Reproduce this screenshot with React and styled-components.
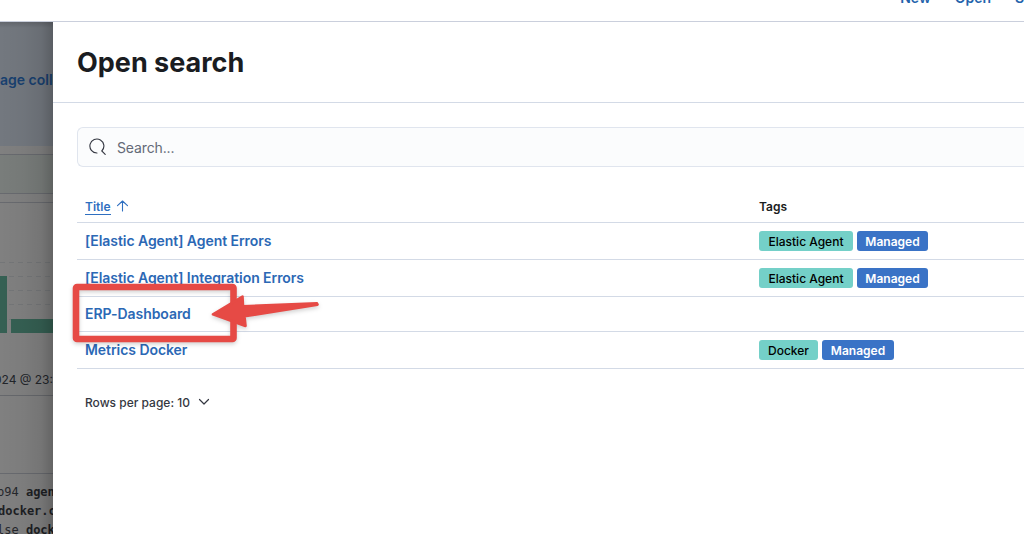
import React from "react";
import styled, { createGlobalStyle } from "styled-components";

const Global = createGlobalStyle`
  *, *::before, *::after { box-sizing: border-box; }
  body { margin: 0; overflow: hidden; background: #fff; font-family: Inter, "Liberation Sans", sans-serif; color: #1a1c21; }
`;

const Page = styled.div`
  width: 100%;
  height: 534px;
  display: flex;
  flex-direction: column;
  overflow: hidden;
`;

const TopBar = styled.nav`
  height: 22px;
  flex: none;
  border-bottom: 1px solid #cacfdc;
  display: flex;
  justify-content: flex-end;
  align-items: flex-end;
  gap: 24px;
  padding-bottom: 13px;
  overflow: hidden;
  white-space: nowrap;
`;

const NavLink = styled.a`
  font-size: 14px;
  line-height: 20px;
  font-weight: 600;
  color: #2463ac;
  &:last-child { width: 9px; }
`;

const Body = styled.div`
  flex: 1;
  min-height: 0;
  display: flex;
`;

const Backdrop = styled.aside`
  width: 53px;
  flex: none;
  position: relative;
  overflow: hidden;
  display: flex;
  flex-direction: column;
  background: #808080;
  white-space: nowrap;
  &::after {
    content: "";
    position: absolute;
    inset: 0;
    background: linear-gradient(to right, rgba(0,0,0,0) 0%, rgba(0,0,0,.03) 45%, rgba(0,0,0,.09) 78%, rgba(0,0,0,.22) 100%),
      linear-gradient(to bottom, rgba(0,0,0,.14), rgba(0,0,0,0) 6px);
  }
`;

const Banner = styled.div`
  height: 124px;
  flex: none;
  padding-top: 48px;
  background: #73787f;
  color: #18406f;
  font-size: 14px;
  line-height: 20px;
  font-weight: 600;
`;

const Strip = styled.div`
  height: ${(p) => p.$h}px;
  flex: none;
  background: ${(p) => p.$bg || "transparent"};
  border-bottom: 1px solid #686a6f;
`;

const Chart = styled.svg`
  display: block;
  flex: none;
  width: 53px;
  height: 131px;
`;

const DateText = styled.div`
  height: 62px;
  flex: none;
  padding-top: 36px;
  border-bottom: 1px solid #66686c;
  font-size: 12px;
  line-height: 20px;
  color: #22252a;
  text-indent: -6px;
`;

const Log = styled.div`
  padding-top: 9px;
  font-family: "DejaVu Sans Mono", "Liberation Mono", monospace;
  font-size: 12px;
  line-height: 19px;
  color: #25272c;
`;

const LogLine = styled.div`
  margin-left: ${(p) => p.$shift}px;
  white-space: pre;
  b { color: #1d1f24; }
`;

const Flyout = styled.main`
  flex: 1;
  min-width: 0;
  background: #fff;
`;

const FlyoutHeader = styled.header`
  height: 81px;
  border-bottom: 1px solid #d3dae6;
  padding: 25px 24px 0;
`;

const Heading = styled.h1`
  margin: 0;
  font-size: 27px;
  line-height: 32px;
  font-weight: 700;
`;

const Content = styled.section`
  padding: 24px 0 0 24px;
`;

const SearchField = styled.div`
  height: 40px;
  border: 1px solid #e0e5ee;
  border-right: 0;
  border-radius: 6px 0 0 6px;
  background: #fbfcfd;
  display: flex;
  align-items: center;
  gap: 11.5px;
  padding: 1px 0 0 10.5px;
  font-size: 14px;
  letter-spacing: -0.13px;
  color: #646a77;
  svg { display: block; margin-top: -1px; }
`;

const Table = styled.div`
  margin-top: 24px;
`;

const Row = styled.div`
  height: ${(p) => p.$h}px;
  border-bottom: 1px solid #d3dae6;
  display: grid;
  grid-template-columns: 674px 1fr;
  align-items: center;
  padding-left: 8px;
`;

const HeadRow = styled(Row)`
  font-size: 12px;
  line-height: 16px;
  font-weight: 600;
  padding-top: 1px;
`;

const SortLabel = styled.div`
  display: flex;
  align-items: center;
  gap: 5px;
  color: #2f6fc0;
  span { border-bottom: 1px solid #2f6fc0; line-height: 15px; }
  svg { margin-top: -2px; }
`;

const TitleLink = styled.a`
  font-size: 14px;
  line-height: 20px;
  font-weight: 600;
  letter-spacing: -0.06px;
  color: #2b68b5;
`;

const Tags = styled.div`
  display: flex;
  gap: 4px;
`;

const Tag = styled.span`
  height: 20px;
  width: ${(p) => p.$w}px;
  border-radius: 3px;
  display: flex;
  align-items: center;
  justify-content: center;
  padding-top: 1px;
  font-size: 12px;
  white-space: nowrap;
  font-weight: ${(p) => (p.$managed ? 600 : 500)};
  background: ${(p) => (p.$managed ? "#3a73c6" : "#74d0c8")};
  color: ${(p) => (p.$managed ? "#fff" : "#000")};
`;

const Pager = styled.div`
  margin-top: 23px;
  padding-left: 8px;
  height: 20px;
  display: flex;
  align-items: center;
  gap: 8px;
  font-size: 12px;
  font-weight: 500;
  color: #343741;
`;

const Annotation = styled.svg`
  position: absolute;
  left: 60px;
  top: 270px;
  pointer-events: none;
  filter: drop-shadow(0 2px 2px rgba(0, 0, 0, 0.18));
`;

const rows = [
  { title: "[Elastic Agent] Agent Errors", tag: "Elastic Agent", tagWidth: 94, managedWidth: 71, h: 37 },
  { title: "[Elastic Agent] Integration Errors", tag: "Elastic Agent", tagWidth: 94, managedWidth: 71, h: 37 },
  { title: "ERP-Dashboard", h: 35 },
  { title: "Metrics Docker", tag: "Docker", tagWidth: 59, managedWidth: 72, h: 37 },
];

export default function App() {
  return (
    <Page>
      <Global />
      <TopBar>
        <NavLink>New</NavLink>
        <NavLink>Open</NavLink>
        <NavLink>Share</NavLink>
      </TopBar>
      <Body>
        <Backdrop>
          <Banner>age collection</Banner>
          <Strip $h={9} />
          <Strip $h={39} $bg="#797d7b" />
          <Strip $h={9} />
          <Chart viewBox="0 203 53 131">
            <path d="M0 262.5H53M0 276.5H53M0 290.5H53M0 304.5H53M0 319.5H53" stroke="#747678" strokeDasharray="5 4" />
            <path d="M0 276H7V333H0ZM11 319H53V333H11Z" fill="#356053" />
          </Chart>
          <DateText>024 @ 23:59</DateText>
          <Strip $h={78} />
          <Log>
            <LogLine $shift={-3}>b94 <b>agent</b></LogLine>
            <LogLine $shift={-2}><b>docker.co</b></LogLine>
            <LogLine $shift={-3}>lse <b>docker</b></LogLine>
          </Log>
        </Backdrop>
        <Flyout>
          <FlyoutHeader>
            <Heading>Open search</Heading>
          </FlyoutHeader>
          <Content>
            <SearchField>
              <svg width="17" height="18" viewBox="0 0 17 18" fill="none" stroke="#343741" strokeWidth="1.1" strokeLinecap="round">
                <path d="M8 15A7 7 0 1 1 12.8 13L16.2 16.4" />
              </svg>
              Search...
            </SearchField>
            <Table>
              <HeadRow $h={32}>
                <SortLabel>
                  <span>Title</span>
                  <svg width="13" height="12" viewBox="0 0 13 12" fill="none" stroke="#2f6fc0" strokeWidth="1.1" strokeLinecap="round" strokeLinejoin="round">
                    <path d="M6.5 11V1M1.5 5.7L6.5 1L11.5 5.7" />
                  </svg>
                </SortLabel>
                <span>Tags</span>
              </HeadRow>
              {rows.map((r) => (
                <Row key={r.title} $h={r.h}>
                  <TitleLink>{r.title}</TitleLink>
                  {r.tag && (
                    <Tags>
                      <Tag $w={r.tagWidth}>{r.tag}</Tag>
                      <Tag $w={r.managedWidth} $managed>Managed</Tag>
                    </Tags>
                  )}
                </Row>
              ))}
            </Table>
            <Pager>
              Rows per page: 10
              <svg width="12" height="8" viewBox="0 0 12 8" fill="none" stroke="#343741" strokeWidth="1.2" strokeLinecap="round" strokeLinejoin="round">
                <path d="M1.5 1.5L6 6L10.5 1.5" />
              </svg>
            </Pager>
          </Content>
        </Flyout>
      </Body>
      <Annotation width="270" height="80" viewBox="60 270 270 80">
        <rect x="76" y="287" width="157.5" height="52" rx="1" fill="none" stroke="#e64a45" strokeWidth="6.6" />
        <path d="M213 314.3L242.5 296.5L243 306.2L317 303.4L317.5 304.6L244.5 316.3L245.5 326Z" fill="#e64a45" stroke="#e64a45" strokeWidth="2.6" strokeLinejoin="round" />
      </Annotation>
    </Page>
  );
}
